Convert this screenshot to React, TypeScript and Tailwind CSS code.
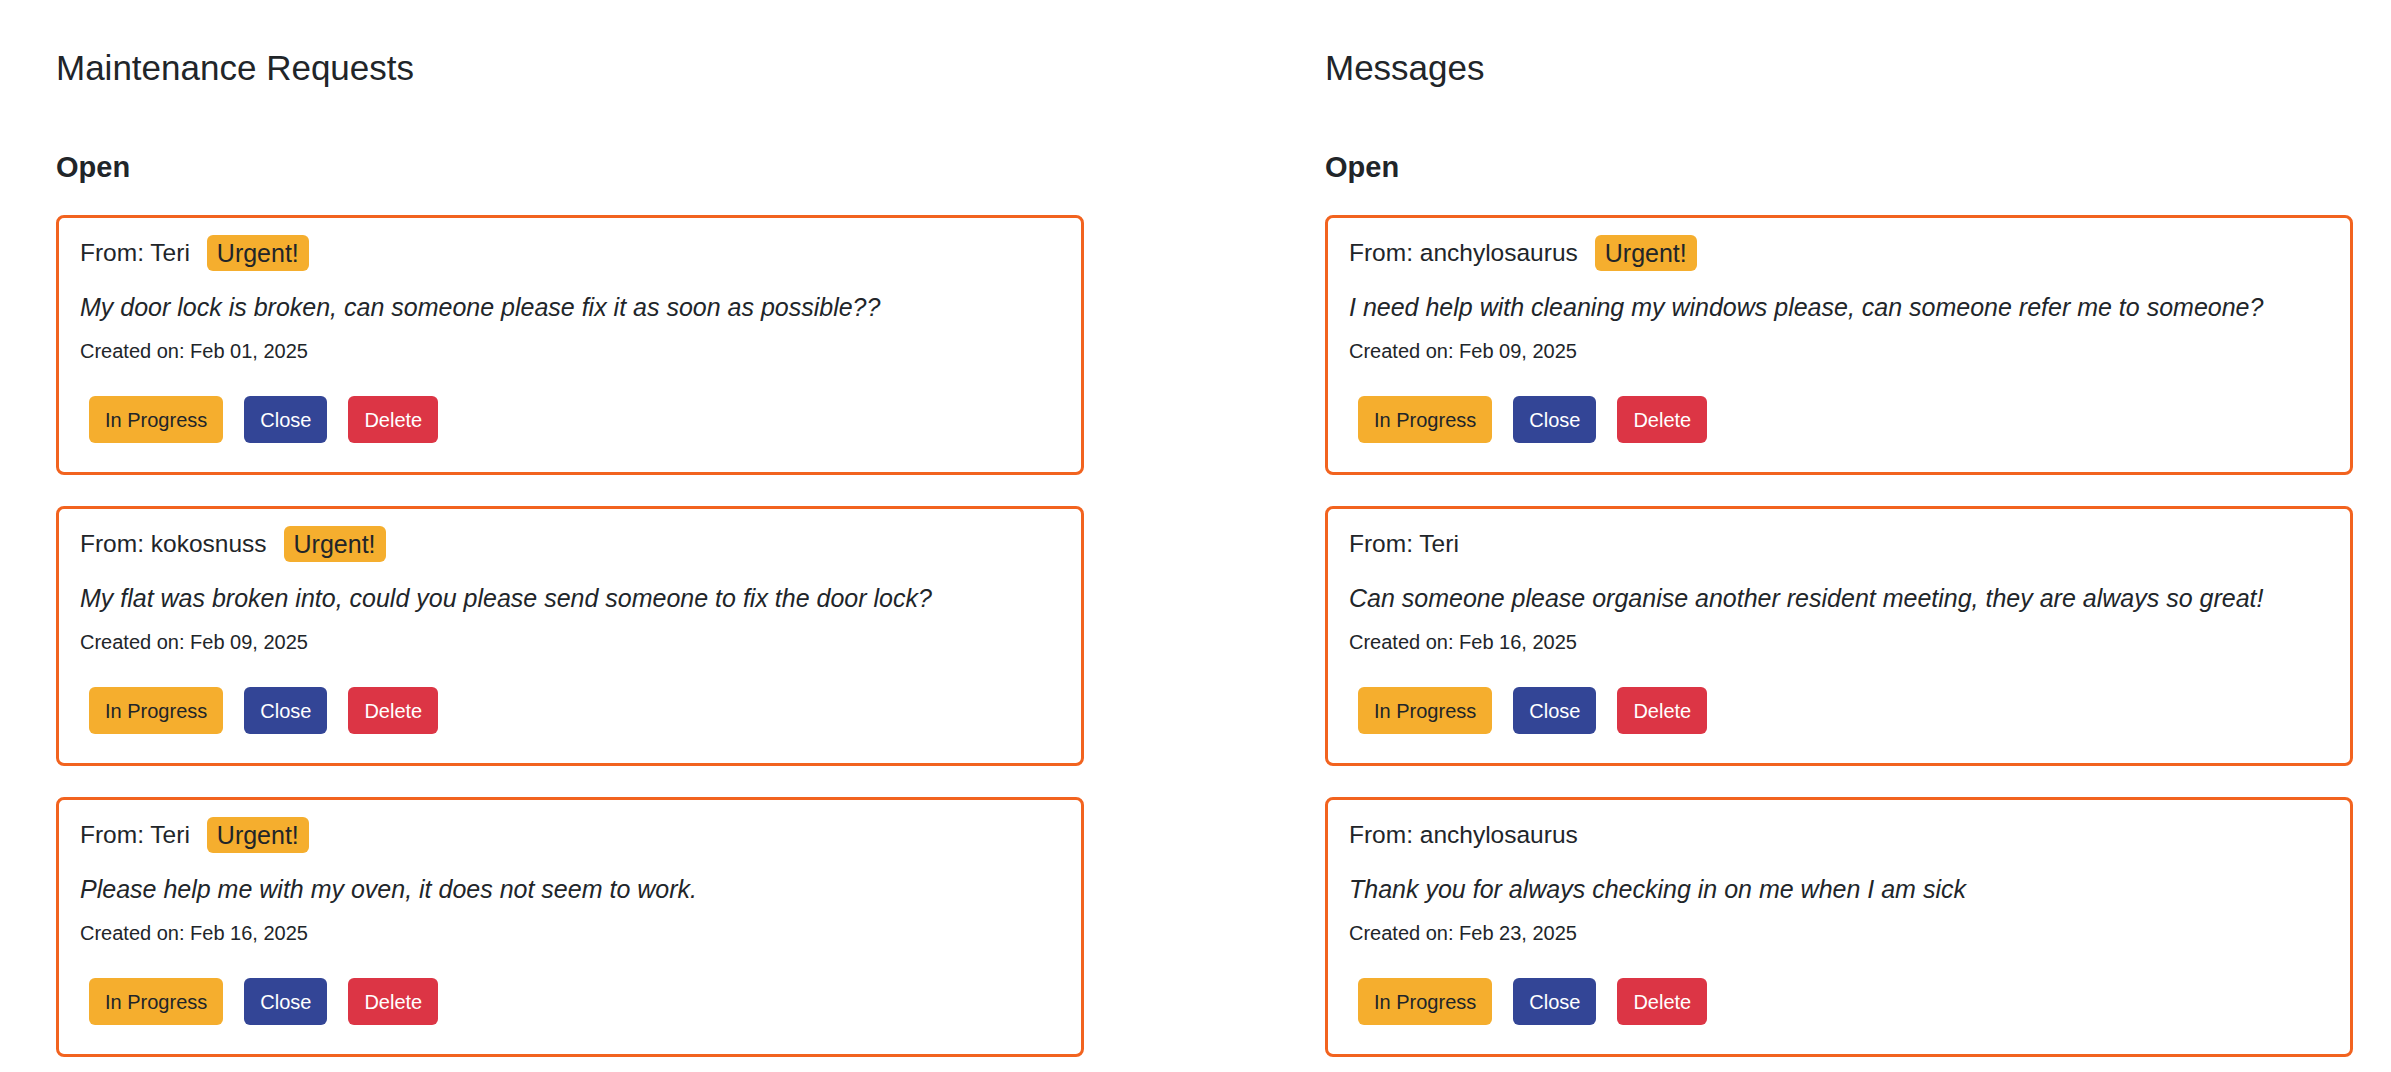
import React from 'react';

type Item = {
  from: string;
  urgent: boolean;
  text: string;
  created: string;
};

const requests: Item[] = [
  { from: 'Teri', urgent: true, text: 'My door lock is broken, can someone please fix it as soon as possible??', created: 'Feb 01, 2025' },
  { from: 'kokosnuss', urgent: true, text: 'My flat was broken into, could you please send someone to fix the door lock?', created: 'Feb 09, 2025' },
  { from: 'Teri', urgent: true, text: 'Please help me with my oven, it does not seem to work.', created: 'Feb 16, 2025' },
];

const messages: Item[] = [
  { from: 'anchylosaurus', urgent: true, text: 'I need help with cleaning my windows please, can someone refer me to someone?', created: 'Feb 09, 2025' },
  { from: 'Teri', urgent: false, text: 'Can someone please organise another resident meeting, they are always so great!', created: 'Feb 16, 2025' },
  { from: 'anchylosaurus', urgent: false, text: 'Thank you for always checking in on me when I am sick', created: 'Feb 23, 2025' },
];

const Card = ({ item }: { item: Item }) => (
  <div className="border-[3px] border-[#f2631f] rounded-[8px] px-[21px] pt-[17px] pb-[29px] bg-white">
    <div className="flex items-center h-[36px]">
      <span className="text-[24.5px] leading-[36px]">From: {item.from}</span>
      {item.urgent && (
        <span className="ml-[17px] h-[36px] px-[10px] flex items-center rounded-[6px] bg-[#f5ae2e] text-[25px] leading-[36px]">
          Urgent!
        </span>
      )}
    </div>
    <p className="mt-[18px] text-[25px] leading-[36px] italic">{item.text}</p>
    <p className="mt-[11px] text-[20px] leading-[30px]">Created on: {item.created}</p>
    <div className="mt-[30px] ml-[9px] flex gap-[21px]">
      <button className="h-[47px] px-[16px] rounded-[6px] bg-[#f5ae2e] text-[#212529] text-[20px]">In Progress</button>
      <button className="h-[47px] px-[16px] rounded-[6px] bg-[#334596] text-white text-[20px]">Close</button>
      <button className="h-[47px] px-[16px] rounded-[6px] bg-[#dc3545] text-white text-[20px]">Delete</button>
    </div>
  </div>
);

const Column = ({ title, items }: { title: string; items: Item[] }) => (
  <div className="flex flex-col">
    <h2 className="text-[35px] leading-[42px]">{title}</h2>
    <h4 className="mt-[61px] text-[29px] leading-[35px] font-bold">Open</h4>
    <div className="mt-[30px] flex flex-col gap-[31px]">
      {items.map((item, i) => (
        <Card key={i} item={item} />
      ))}
    </div>
  </div>
);

export default function App() {
  return (
    <div
      className="min-h-screen bg-white text-[#212529] pt-[47px] pl-[56px]"
      style={{ fontFamily: '"Liberation Sans", Arial, sans-serif' }}
    >
      <div className="grid grid-cols-[1028px_1028px] gap-x-[241px]">
        <Column title="Maintenance Requests" items={requests} />
        <Column title="Messages" items={messages} />
      </div>
    </div>
  );
}
